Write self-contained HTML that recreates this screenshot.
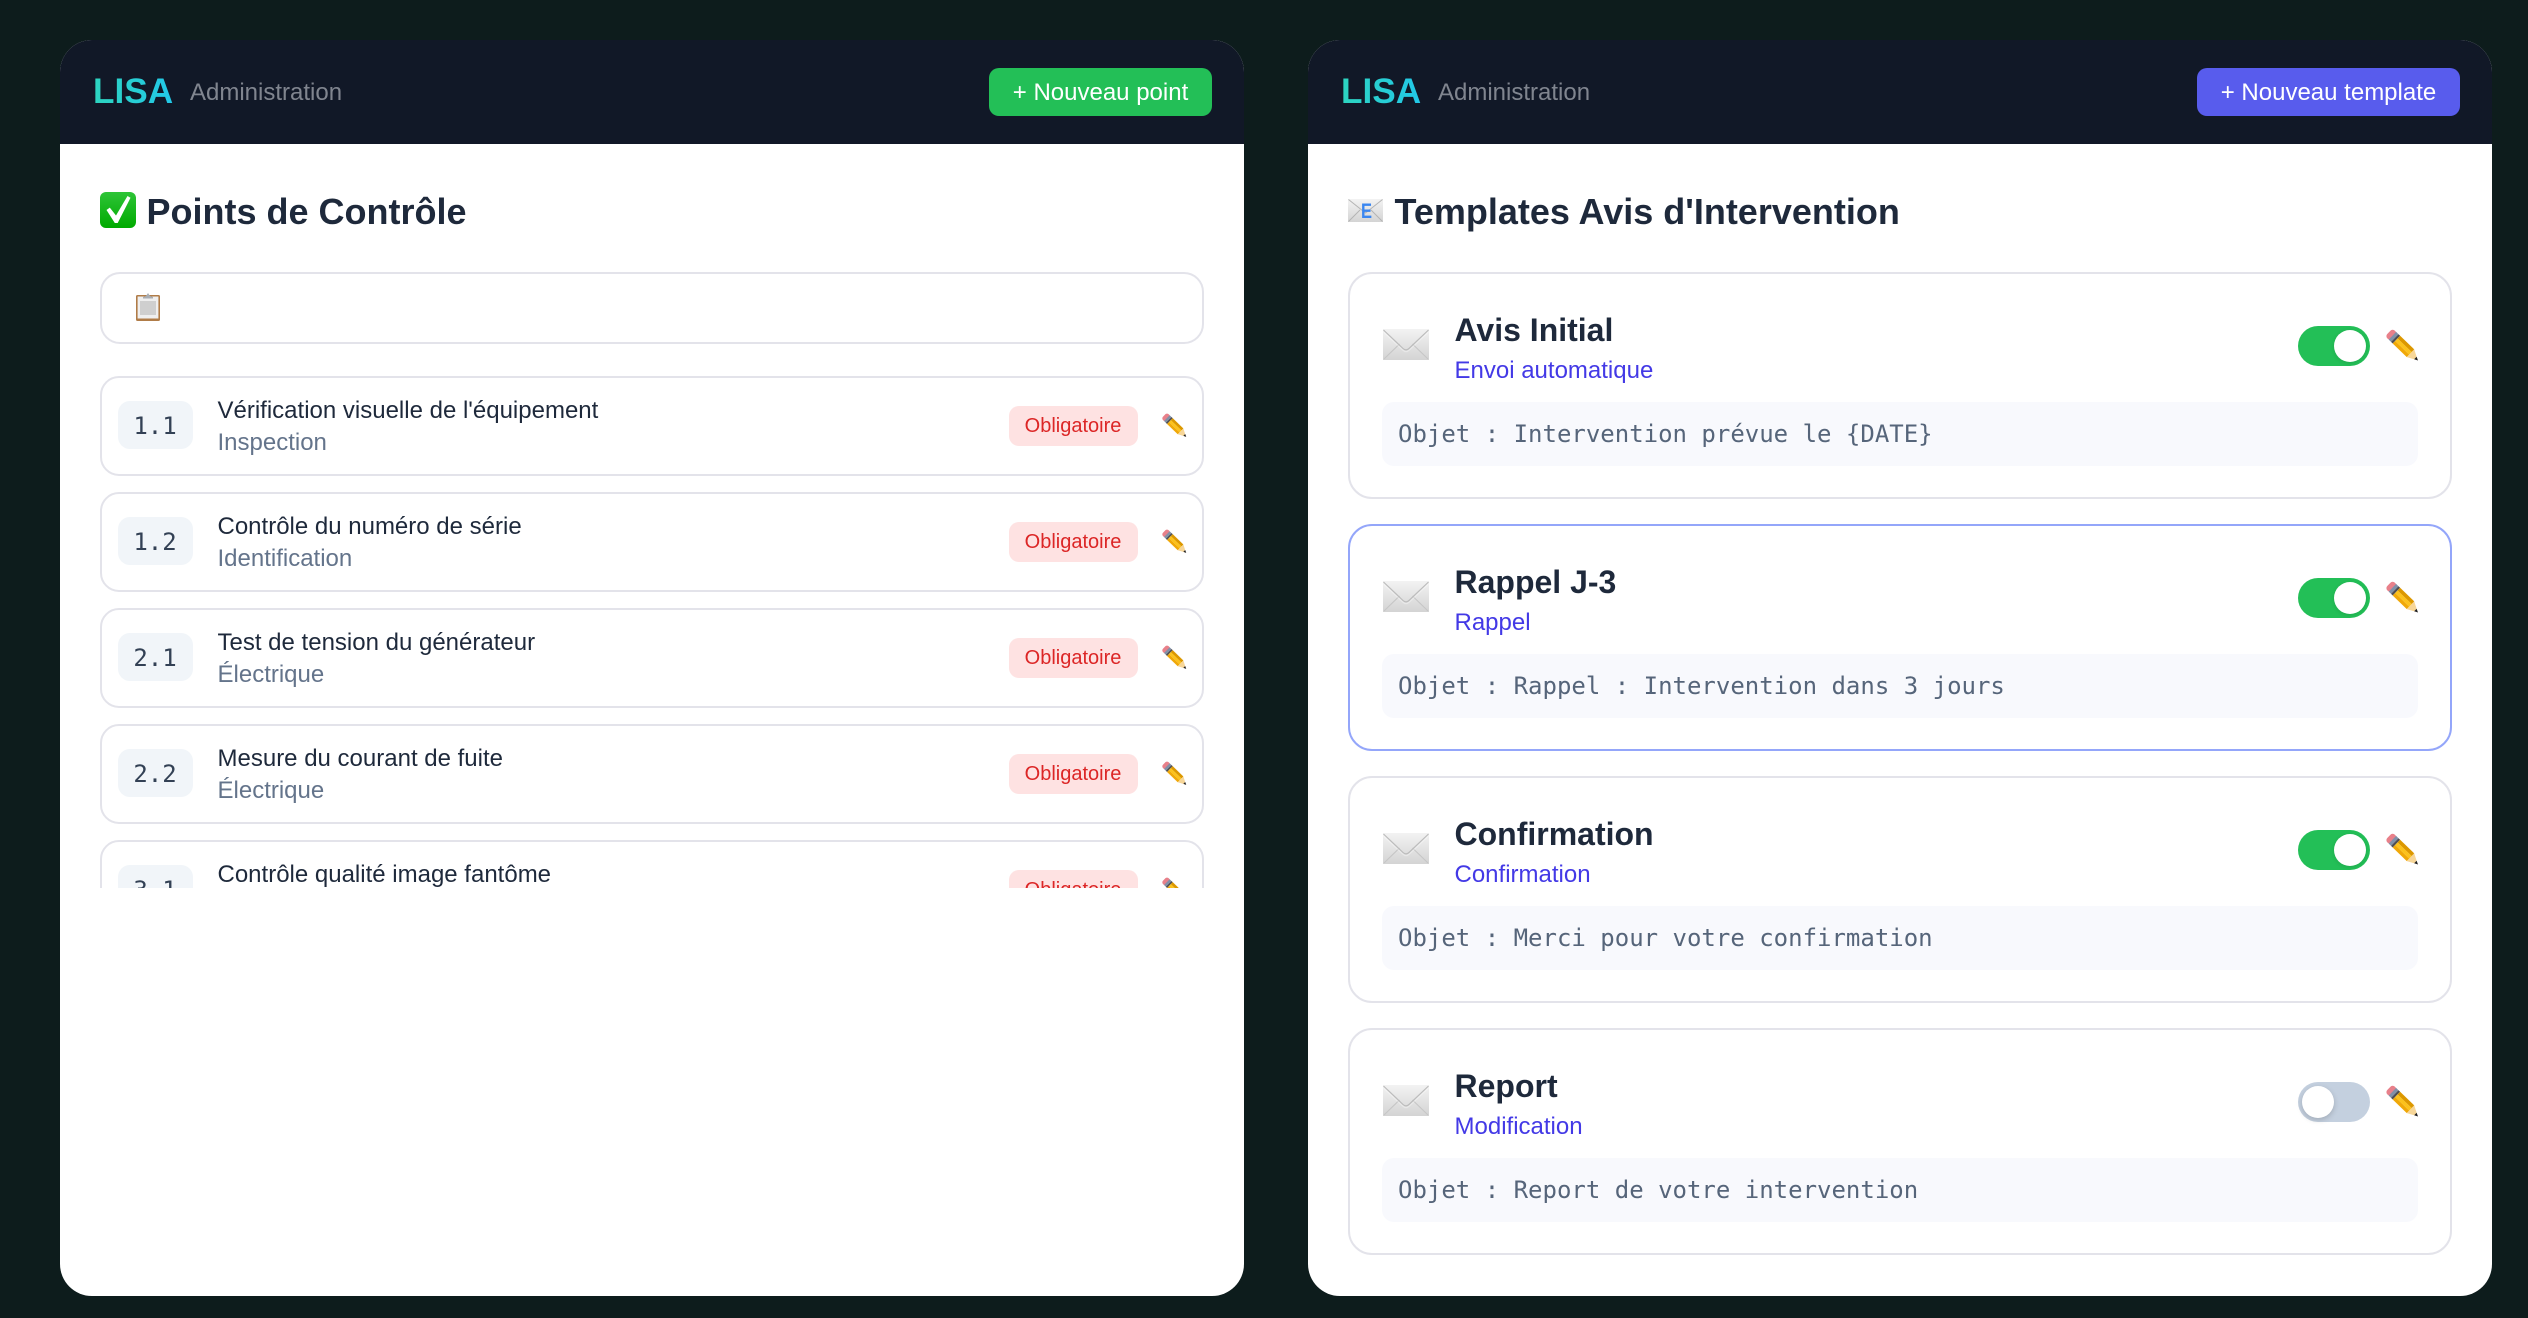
<!DOCTYPE html>
<html lang="fr"><head><meta charset="utf-8"><title>LISA Administration</title>
<style>
*{box-sizing:border-box;margin:0;padding:0}
html,body{width:2528px;height:1318px;overflow:hidden;background:#0d1c1c;font-family:"Liberation Sans",sans-serif}
.a{position:absolute;white-space:nowrap;line-height:normal}
.panel{position:absolute;top:40px;width:1184px;height:1256px;background:#fff;border-radius:32px;overflow:hidden}
.head{position:absolute;left:0;top:0;width:100%;height:104px;background:#111827}
.lisa{left:33px;top:32px;font-size:35.2px;font-weight:700;background:linear-gradient(90deg,#2dd4bf,#22c8e8);-webkit-background-clip:text;background-clip:text;color:transparent}
.adm{left:130px;top:39.3px;font-size:24px;color:#80858f}
.btn{position:absolute;top:28px;height:48px;border-radius:10px;color:#fff;font-size:24px;line-height:49px;text-align:center;white-space:nowrap}
.title{top:151.4px;left:86.5px;font-size:36px;font-weight:700;color:#1e293b}
.box{position:absolute;border:2.5px solid #e3e3ea;background:#fff}
.clip{position:absolute;left:40px;top:336px;width:1104px;height:512px;overflow:hidden}
.item{position:absolute;left:0;width:1104px;height:100px;border:2.5px solid #e3e3ea;border-radius:19px;background:#fff}
.num{position:absolute;left:15.5px;top:23px;width:75px;height:48px;border-radius:12px;background:#f1f5f9;color:#334155;font:24px/50px "DejaVu Sans Mono",monospace;text-align:center}
.t1{left:115.5px;top:19px;font-size:24px;color:#1e293b}
.t2{left:115.5px;top:51px;font-size:24px;color:#64748b}
.req{position:absolute;left:906.5px;top:28px;height:40px;width:129px;border-radius:10px;background:#fee2e2;color:#dc2626;font-size:20px;line-height:41px;text-align:center}
.pi{position:absolute;left:1060px;top:34.5px}
.card{position:absolute;left:40px;width:1104px;height:227px;border:2.5px solid #e3e3ea;border-radius:24px;background:#fff}
.card.sel{border-color:#94a6fa}
.env{position:absolute;left:32.5px;top:54.5px}
.ct{left:104.5px;font-size:32px;font-weight:700;color:#1e293b;top:38px}
.cs{left:104.5px;top:83px;font-size:24px;color:#4339e6}
.sub{position:absolute;left:32px;top:127.5px;width:1036px;height:64px;border-radius:12px;background:#f8f9fd}
.sub span{position:absolute;left:16px;top:18px;font:24px/28px "DejaVu Sans Mono",monospace;color:#56657a;white-space:nowrap}
.tg{position:absolute;left:948px;top:51.5px;width:72px;height:40px;border-radius:20px;background:#23bf57}
.tg i{position:absolute;left:36px;top:4px;width:32px;height:32px;border-radius:50%;background:#fff;box-shadow:0 1px 4px rgba(0,0,0,.12)}
.tg.off{background:#c4d0df}
.tg.off i{left:4px;box-shadow:0 2px 6px rgba(0,0,0,.18)}
.pc{position:absolute;left:1035.5px;top:54.5px}
</style></head><body>
<svg width="0" height="0" style="position:absolute">
<defs>
<linearGradient id="gE" x1="0" y1="0" x2="0" y2="1"><stop offset="0" stop-color="#f3f3f3"/><stop offset="1" stop-color="#d4d4d4"/></linearGradient>
<linearGradient id="gC" x1="0" y1="0" x2="0" y2="1"><stop offset="0" stop-color="#2ec437"/><stop offset="1" stop-color="#00aa00"/></linearGradient>
<symbol id="pencil" viewBox="0 0 32 32">
<g transform="translate(5.2 5.6) rotate(44)">
<rect x="-3.4" y="-5.2" width="7" height="10.4" rx="3" fill="#e8808a"/>
<rect x="1.4" y="-5.2" width="3.2" height="10.4" fill="#8090a8"/>
<rect x="4.6" y="-5.2" width="2.2" height="10.4" fill="#4e4e54"/>
<rect x="6.8" y="-5.2" width="19" height="3.6" fill="#dc9800"/>
<rect x="6.8" y="-1.6" width="19" height="3.4" fill="#fcc21b"/>
<rect x="6.8" y="1.8" width="19" height="3.4" fill="#f0a808"/>
<polygon points="25.8,-5.2 25.8,5.2 35.6,0" fill="#f7d698"/>
<polygon points="32.4,-1.7 32.4,1.7 35.9,0" fill="#202024"/>
</g>
</symbol>
<symbol id="envelope" viewBox="0 0 46 31">
<rect width="46" height="31" fill="url(#gE)"/>
<path d="M1 30L16.5 15M45 30L29.5 15" stroke="#c6c6c6" stroke-width="1.1" fill="none"/>
<path d="M.5 1L20 19.5Q23 22.3 26 19.5L45.5 1" stroke="#bcbcbc" stroke-width="1.2" fill="none"/>
<path d="M.5 3L20 21.3Q23 24 26 21.3L45.5 3" stroke="#ffffff" stroke-opacity=".35" stroke-width="1.1" fill="none"/>
</symbol>
</defs></svg>

<!-- LEFT PANEL -->
<div class="panel" style="left:60px">
 <div class="head"></div>
 <div class="a lisa">LISA</div>
 <div class="a adm">Administration</div>
 <div class="btn" style="left:929px;width:223px;background:#23bf57">+ Nouveau point</div>
 <svg class="a" style="left:40px;top:152px" width="36" height="36" viewBox="0 0 36 36"><rect width="36" height="36" rx="6" fill="url(#gC)"/><path d="M6.5 18L9.8 15.6L16 23.5L27.5 4L30.5 5.8L17.7 31H14.8Z" fill="#fff"/></svg>
 <div class="a title">Points de Contrôle</div>
 <div class="box" style="left:40px;top:232px;width:1104px;height:72px;border-radius:20px"></div>
 <svg class="a" style="left:76px;top:253px" width="24" height="28" viewBox="0 0 24 28"><rect y="2" width="24" height="26" rx="1.5" fill="#b07c48"/><rect x="1.6" y="3.5" width="20.8" height="22" fill="#efefef"/><rect x="4" y="8" width="16" height="14" fill="#cfcfcf"/><path d="M7 4L10 3L12 0L14 3L17 4V5.5H7Z" fill="#a9aeb4"/></svg>
 <div class="clip">
  <div class="item" style="top:0"><div class="num">1.1</div><div class="a t1">Vérification visuelle de l'équipement</div><div class="a t2">Inspection</div><div class="req">Obligatoire</div><svg class="pi" width="25" height="25"><use href="#pencil"/></svg></div>
  <div class="item" style="top:116px"><div class="num">1.2</div><div class="a t1">Contrôle du numéro de série</div><div class="a t2">Identification</div><div class="req">Obligatoire</div><svg class="pi" width="25" height="25"><use href="#pencil"/></svg></div>
  <div class="item" style="top:232px"><div class="num">2.1</div><div class="a t1">Test de tension du générateur</div><div class="a t2">Électrique</div><div class="req">Obligatoire</div><svg class="pi" width="25" height="25"><use href="#pencil"/></svg></div>
  <div class="item" style="top:348px"><div class="num">2.2</div><div class="a t1">Mesure du courant de fuite</div><div class="a t2">Électrique</div><div class="req">Obligatoire</div><svg class="pi" width="25" height="25"><use href="#pencil"/></svg></div>
  <div class="item" style="top:464px"><div class="num">3.1</div><div class="a t1">Contrôle qualité image fantôme</div><div class="a t2">Image</div><div class="req">Obligatoire</div><svg class="pi" width="25" height="25"><use href="#pencil"/></svg></div>
 </div>
</div>

<!-- RIGHT PANEL -->
<div class="panel" style="left:1308px">
 <div class="head"></div>
 <div class="a lisa">LISA</div>
 <div class="a adm">Administration</div>
 <div class="btn" style="left:889px;width:263px;background:#585ced">+ Nouveau template</div>
 <svg class="a" style="left:40px;top:159px" width="35" height="23" viewBox="0 0 35 23"><rect width="35" height="23" fill="url(#gE)"/><path d="M.5 .5L17.5 14L34.5 .5M.5 22.5L12 11M34.5 22.5L23 11" stroke="#b4b4b4" stroke-width="1" fill="none"/><text x="13" y="19" textLength="11" lengthAdjust="spacingAndGlyphs" font-family="Liberation Sans" font-weight="700" font-size="21" fill="#3a86f0">E</text></svg>
 <div class="a title">Templates Avis d'Intervention</div>

 <div class="card" style="top:232px"><svg class="env" width="46" height="31"><use href="#envelope"/></svg><div class="a ct">Avis Initial</div><div class="a cs">Envoi automatique</div><div class="tg"><i></i></div><svg class="pc" width="33" height="33"><use href="#pencil"/></svg><div class="sub"><span>Objet : Intervention prévue le {DATE}</span></div></div>
 <div class="card sel" style="top:484px"><svg class="env" width="46" height="31"><use href="#envelope"/></svg><div class="a ct">Rappel J-3</div><div class="a cs">Rappel</div><div class="tg"><i></i></div><svg class="pc" width="33" height="33"><use href="#pencil"/></svg><div class="sub"><span>Objet : Rappel : Intervention dans 3 jours</span></div></div>
 <div class="card" style="top:736px"><svg class="env" width="46" height="31"><use href="#envelope"/></svg><div class="a ct">Confirmation</div><div class="a cs">Confirmation</div><div class="tg"><i></i></div><svg class="pc" width="33" height="33"><use href="#pencil"/></svg><div class="sub"><span>Objet : Merci pour votre confirmation</span></div></div>
 <div class="card" style="top:988px"><svg class="env" width="46" height="31"><use href="#envelope"/></svg><div class="a ct">Report</div><div class="a cs">Modification</div><div class="tg off"><i></i></div><svg class="pc" width="33" height="33"><use href="#pencil"/></svg><div class="sub"><span>Objet : Report de votre intervention</span></div></div>
</div>
</body></html>
